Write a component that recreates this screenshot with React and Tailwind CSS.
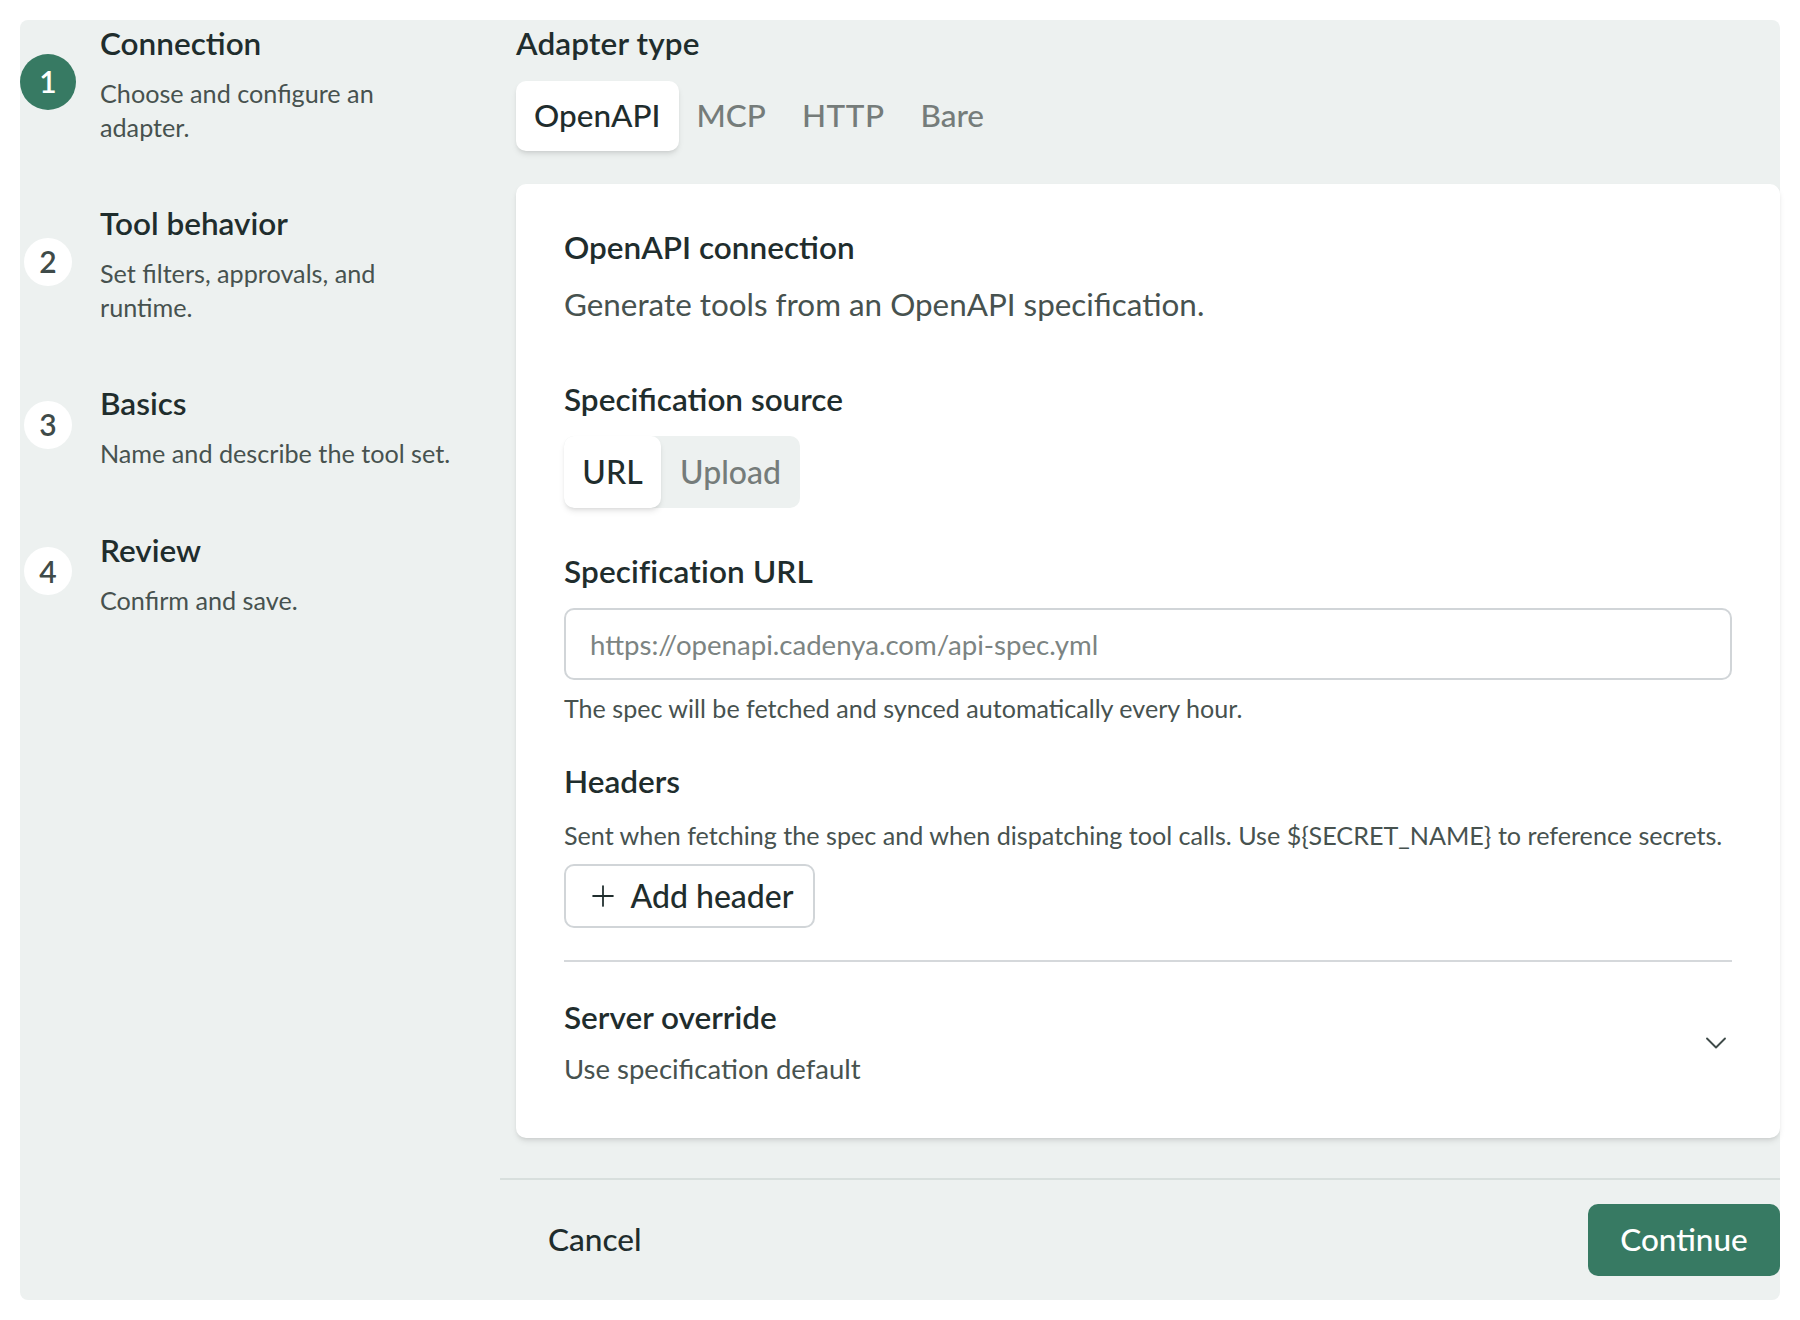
import { ChevronDown, Plus } from 'lucide-react';

const steps = [
    { n: 1, title: 'Connection', desc: ['Choose and configure an', 'adapter.'], active: true },
    { n: 2, title: 'Tool behavior', desc: ['Set filters, approvals, and', 'runtime.'] },
    { n: 3, title: 'Basics', desc: ['Name and describe the tool set.'] },
    { n: 4, title: 'Review', desc: ['Confirm and save.'] },
];

function Step({ step }) {
    return (
        <div className="flex items-center gap-6">
            <div className="flex w-14 shrink-0 justify-center pb-1">
                {step.active ? (
                    <div className="flex size-14 items-center justify-center rounded-full bg-[#377a63] text-[30px] font-semibold text-white">{step.n}</div>
                ) : (
                    <div className="flex size-12 items-center justify-center rounded-full bg-white text-[30px] font-semibold text-[#3f4b49]">{step.n}</div>
                )}
            </div>
            <div>
                <div className="text-[31.5px] leading-10 font-semibold text-[#1f2d2d]">{step.title}</div>
                <div className="mt-[14px] text-[25.2px] leading-[33.5px] text-[#47524f]">
                    {step.desc.map((line) => <div key={line}>{line}</div>)}
                </div>
            </div>
        </div>
    );
}

export default function App() {
    return (
        <div className="bg-white p-5 font-['Lato',sans-serif]">
            <div className="flex h-[1280px] rounded-lg bg-[#edf1f0]">
                {/* Stepper */}
                <div className="flex w-[480px] shrink-0 flex-col gap-[59px] pt-[3px]">
                    {steps.map((s) => <Step key={s.n} step={s} />)}
                </div>

                <div className="flex min-w-0 flex-1 flex-col">
                    <div className="pt-[3px] pl-4">
                        <div className="text-[31.5px] leading-10 font-semibold tracking-[0.15px] text-[#1f2d2d]">Adapter type</div>
                        <div className="mt-[18px] flex text-[31.5px] font-medium text-[#757c7a]">
                            <div className="flex h-[70px] items-center rounded-[10px] bg-white pr-[19px] pl-[18px] text-[#1f2d2d] shadow-md">OpenAPI</div>
                            <div className="flex h-[70px] items-center pr-[18px] pl-[17px]">MCP</div>
                            <div className="flex h-[70px] items-center px-[18px] tracking-[0.5px]">HTTP</div>
                            <div className="flex h-[70px] items-center px-[18px]">Bare</div>
                        </div>

                        {/* Card */}
                        <div className="mt-[33px] rounded-[10px] bg-white px-12 pt-[43px] pb-[52px] shadow-md">
                            <div className="text-[31.5px] leading-10 font-semibold text-[#1f2d2d]">OpenAPI connection</div>
                            <div className="mt-[15px] text-[31.4px] leading-[44px] text-[#47524f]">Generate tools from an OpenAPI specification.</div>

                            <div className="mt-[53px] text-[31.5px] leading-10 font-semibold text-[#1f2d2d]">Specification source</div>
                            <div className="mt-[17px] flex h-[72px] w-[236px] rounded-[10px] bg-[#edf1f0] text-[32px] font-medium text-[#757c7a]">
                                <div className="flex w-[97px] items-center justify-center rounded-[10px] bg-white text-[#1f2d2d] shadow-md">URL</div>
                                <div className="flex flex-1 items-center justify-center">Upload</div>
                            </div>

                            <div className="mt-[43px] text-[31.5px] leading-10 font-semibold tracking-[0.15px] text-[#1f2d2d]">Specification URL</div>
                            <input
                                className="mt-[17px] block h-[72px] w-full rounded-[10px] border-2 border-[#d1d5d8] bg-white px-6 text-[27.6px] outline-none placeholder:text-[#7c8482]"
                                placeholder="https://openapi.cadenya.com/api-spec.yml"
                            />
                            <div className="mt-[11px] text-[25.1px] leading-[34px] text-[#47524f]">The spec will be fetched and synced automatically every hour.</div>

                            <div className="mt-9 text-[31.5px] leading-10 font-semibold text-[#1f2d2d]">Headers</div>
                            <div className="mt-[17px] text-[25.15px] leading-[34px] whitespace-nowrap text-[#47524f]">
                                {'Sent when fetching the spec and when dispatching tool calls. Use ${SECRET_NAME} to reference secrets.'}
                            </div>
                            <button className="mt-3 flex h-16 w-[251px] items-center justify-center gap-[11px] rounded-[10px] border-2 border-[#d1d5d8] bg-white text-[32px] font-medium text-[#1f2d2d]">
                                <Plus size={34} strokeWidth={1.25} />
                                Add header
                            </button>

                            <div className="mt-8 h-0.5 bg-[#d5d8db]"></div>

                            <div className="mt-[35px] flex items-center justify-between">
                                <div>
                                    <div className="text-[31.5px] leading-10 font-semibold text-[#1f2d2d]">Server override</div>
                                    <div className="mt-[15px] text-[27.5px] leading-[34px] text-[#47524f]">Use specification default</div>
                                </div>
                                <ChevronDown size={36} strokeWidth={1.25} className="-mr-0.5 mt-0.5 text-[#3f4b49]" />
                            </div>
                        </div>
                    </div>

                    {/* Footer */}
                    <div className="mt-10 flex items-center justify-between border-t-2 border-[#d8dfdd] pt-6">
                        <button className="pl-[48px] text-[31.6px] font-medium text-[#1f2d2d]">Cancel</button>
                        <button className="h-[72px] w-[192px] rounded-[10px] bg-[#377a63] text-[31.5px] font-medium text-white">Continue</button>
                    </div>
                </div>
            </div>
        </div>
    );
}
